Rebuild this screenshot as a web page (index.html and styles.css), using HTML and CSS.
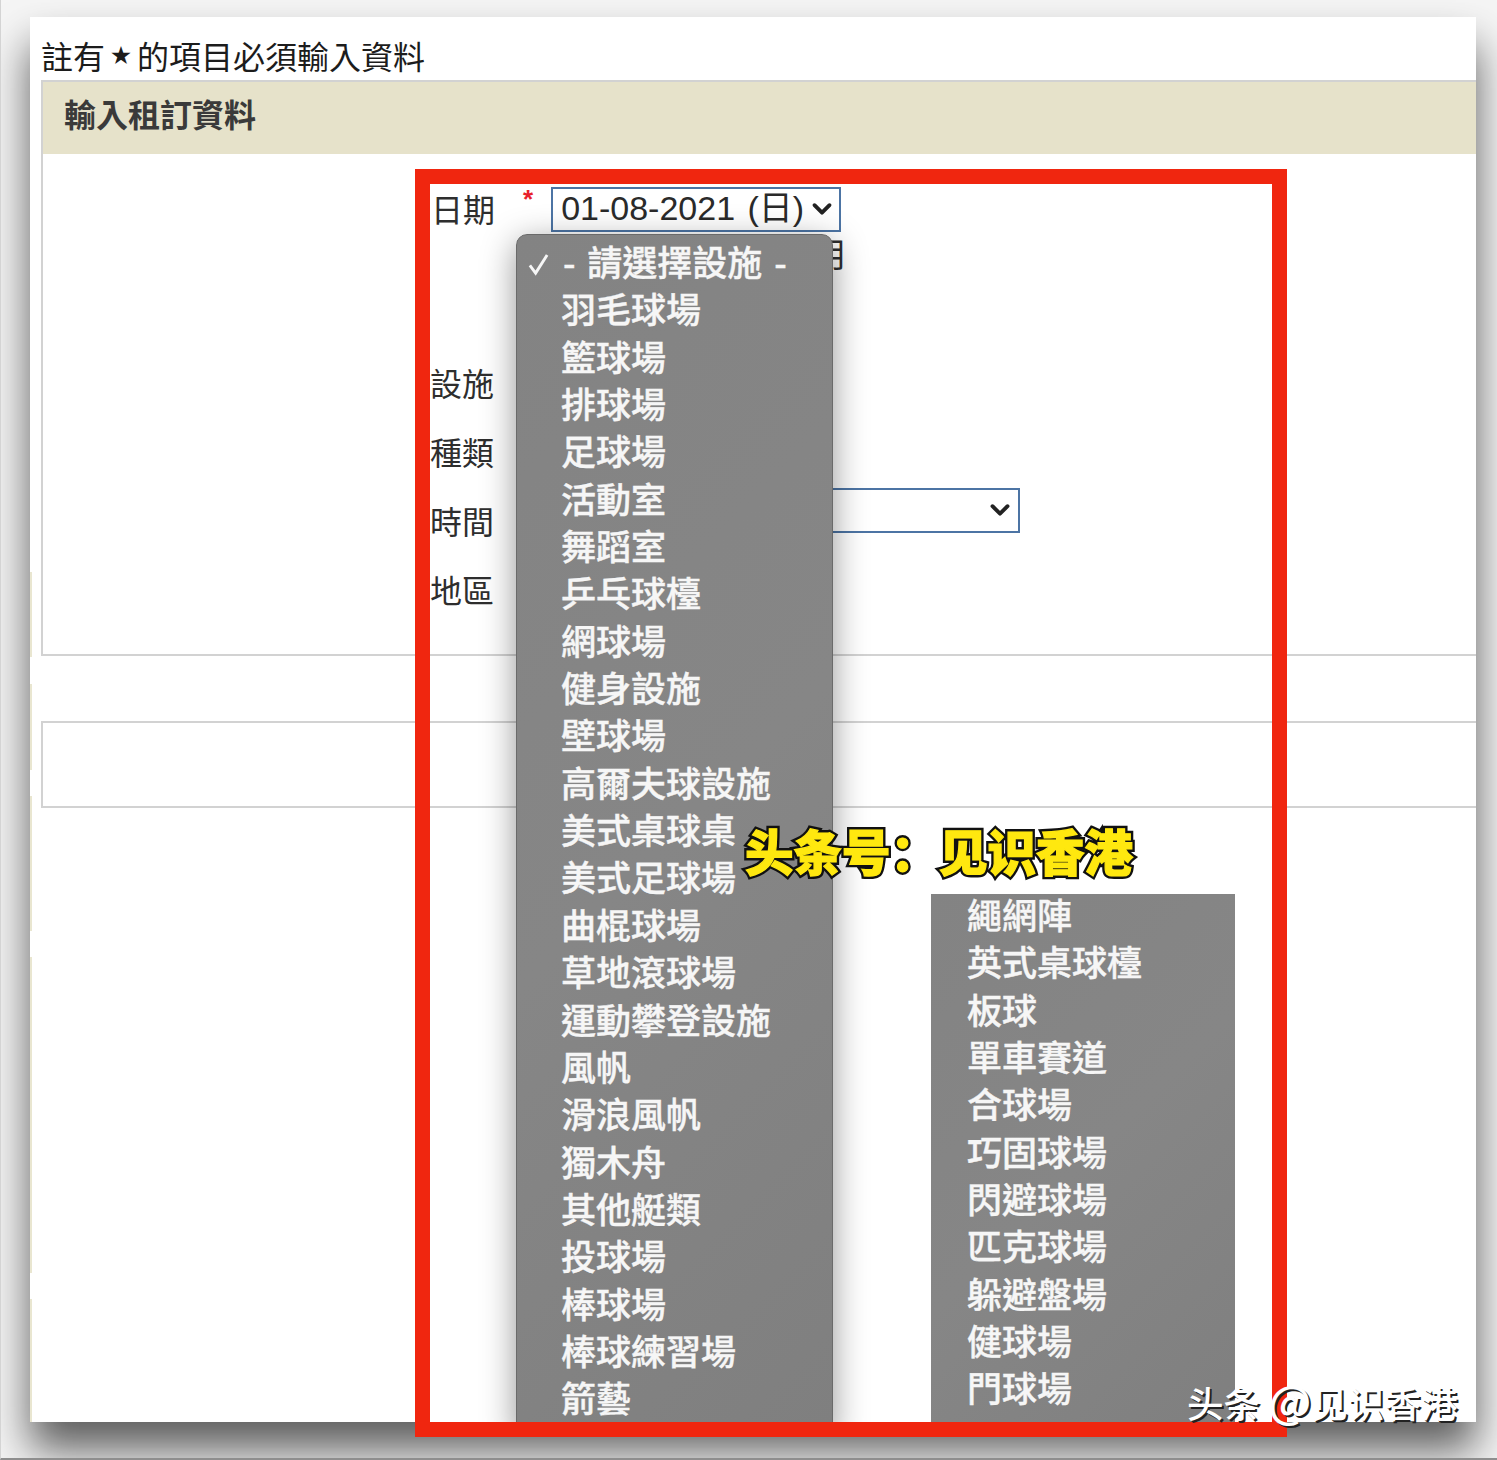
FILE: index.html
```html
<!DOCTYPE html>
<html lang="zh-Hant">
<head>
<meta charset="utf-8">
<title>輸入租訂資料</title>
<link rel="stylesheet" href="styles.css">
</head>
<body>
<div class="stage">
  <main class="window">
    <i class="edge"></i>
    <p class="note">註有<span class="star">★</span>的項目必須輸入資料</p>
    <section class="panel panel-form">
      <h1 class="panel-title">輸入租訂資料</h1>
      <form class="form">
        <div class="row row-date">
          <span class="label">日期</span>
          <span class="req">*</span>
          <div class="select select-date"><span>01-08-2021 (日)</span><svg class="chev" viewBox="0 0 20 14"><path d="M3 3l7 7 7-7"/></svg></div>
        </div>
        <div class="hint">用</div>
        <div class="row"><span class="label">設施</span></div>
        <div class="row"><span class="label">種類</span></div>
        <div class="row">
          <span class="label">時間</span>
          <div class="select select-time"><svg class="chev" viewBox="0 0 20 14"><path d="M3 3l7 7 7-7"/></svg></div>
        </div>
        <div class="row"><span class="label">地區</span></div>
      </form>
    </section>
    <section class="panel panel-empty"></section>

    <ul class="menu menu-main">
      <li class="checked"><svg class="check" viewBox="0 0 24 26"><path d="M3 14l6 8L21 3"/></svg>- 請選擇設施 -</li>
      <li>羽毛球場</li><li>籃球場</li><li>排球場</li><li>足球場</li><li>活動室</li><li>舞蹈室</li>
      <li>乒乓球檯</li><li>網球場</li><li>健身設施</li><li>壁球場</li><li>高爾夫球設施</li><li>美式桌球桌</li>
      <li>美式足球場</li><li>曲棍球場</li><li>草地滾球場</li><li>運動攀登設施</li><li>風帆</li><li>滑浪風帆</li>
      <li>獨木舟</li><li>其他艇類</li><li>投球場</li><li>棒球場</li><li>棒球練習場</li><li>箭藝</li>
    </ul>
    <ul class="menu menu-rest">
      <li>繩網陣</li><li>英式桌球檯</li><li>板球</li><li>單車賽道</li><li>合球場</li><li>巧固球場</li>
      <li>閃避球場</li><li>匹克球場</li><li>躲避盤場</li><li>健球場</li><li>門球場</li>
    </ul>
  </main>
  <div class="frame"></div>
  <div class="banner" lang="zh-Hans" data-text="头条号：见识香港">头条号：见识香港</div>
  <div class="mark" lang="zh-Hans">头条 <span class="at">@</span>见识香港</div>
</div>
</body>
</html>
```
FILE: styles.css
```css
* { box-sizing: border-box; }
html, body { margin: 0; padding: 0; }
body {
  width: 1497px;
  height: 1460px;
  overflow: hidden;
  background: #f5f5f5;
  font-family: "Liberation Sans", "Noto Sans CJK TC", sans-serif;
  color: #2b2b2b;
}
.stage {
  position: relative;
  width: 1497px;
  height: 1460px;
  padding: 17px 21px 36px 30px;
  border-left: 1px solid #d4d4d4;
  border-bottom: 2px solid #8e8e8e;
  overflow: hidden;
}
.window {
  position: relative;
  height: 100%;
  margin-left: -1px;
  padding: 20px 0 0 11px;
  background: #fff;
  overflow: hidden;
  box-shadow: 0 28px 40px rgba(0, 0, 0, .62);
}
.edge {
  position: absolute;
  left: 0;
  top: 555px;
  height: 850px;
  width: 2px;
  background: linear-gradient(
    #e9e6d0 0 85px, transparent 85px 112px,
    #e9e6d0 112px 198px, transparent 198px 224px,
    #e9e6d0 224px 359px, transparent 359px 385px,
    #e9e6d0 385px 701px, transparent 701px 727px,
    #e9e6d0 727px 850px);
}
.note {
  margin: 0;
  height: 43px;
  font-size: 32px;
  line-height: 36px;
  color: #1c1c1c;
  font-family: "Noto Sans CJK TC", sans-serif;
  white-space: pre;
}
.star {
  display: inline-block;
  width: 32px;
  text-align: center;
  font: 25px/36px "DejaVu Sans", sans-serif;
  vertical-align: top;
  padding-top: 1px;
}
.panel {
  margin-right: -3px;
  border: 2px solid #d2d2d2;
}
.panel-form { height: 576px; }
.panel-empty { height: 87px; margin-top: 65px; }
.panel-title {
  margin: 0;
  height: 72px;
  padding: 0 0 0 21px;
  background: #e6e2ca;
  font: 700 32px/62px "Noto Sans CJK TC", sans-serif;
  color: #3a3a3a;
}
.form {
  padding: 33px 0 0 387px;
  font-family: "Noto Sans CJK TC", sans-serif;
}
.row {
  display: flex;
  align-items: center;
  height: 69px;
}
.row-date { height: 46px; align-items: flex-start; padding-left: 1px; }
.label { width: 64px; padding-top: 14px; font-size: 32px; line-height: 46px; color: #2e2e2e; }
.row-date .label { padding-top: 0; margin-top: -2px; }
.req {
  margin: -1px 0 0 28px;
  color: #e8202a;
  font: 700 26px/26px "Liberation Sans", sans-serif;
}
.select {
  display: flex;
  align-items: center;
  justify-content: space-between;
  height: 45px;
  border: 2px solid #4c74a4;
  background: #fff;
}
.select-date {
  width: 290px;
  margin-left: 18px;
  padding: 0 6px 2px 8px;
  font: 34px/41px "Liberation Sans", "Noto Sans CJK TC", sans-serif;
  word-spacing: 3px;
  color: #2a2a2a;
}
.select-time {
  width: 502px;
  margin-left: 24px;
  margin-top: -4px;
  padding-right: 7px;
  justify-content: flex-end;
}
.chev { width: 22px; height: 15px; flex: none; }
.select-date .chev { margin-top: 2px; }
.chev path { fill: none; stroke: #222; stroke-width: 3.6; stroke-linecap: round; stroke-linejoin: round; }
.hint {
  height: 107px;
  margin-left: 382px;
  font-size: 34px;
  line-height: 40px;
  color: #2e2e2e;
}
.menu {
  position: absolute;
  margin: 0;
  padding: 0;
  list-style: none;
  background: linear-gradient(135deg, #838383, #868686 50%, #7f7f7f);
  font: 500 35px/47.35px "Noto Sans CJK TC", sans-serif;
  -webkit-text-stroke: .4px #f6f6f6;
  color: #f6f6f6;
  white-space: nowrap;
}
.menu-main {
  left: 486px;
  top: 217px;
  width: 317px;
  height: 1200px;
  padding: 2px 0 0 44px;
  border: 1px solid #6a6a6a;
  border-radius: 11px 11px 0 0;
  box-shadow: 0 8px 34px rgba(0, 0, 0, .42);
}
.menu-rest {
  left: 901px;
  top: 877px;
  width: 304px;
  height: 540px;
  padding: 0 0 0 36px;
}
.menu-rest li:first-child { margin-top: -4px; }
.checked { position: relative; padding-left: 2px; word-spacing: 4px; }
.check {
  position: absolute;
  left: -34px;
  top: 14.5px;
  width: 23px;
  height: 25px;
}
.check path { fill: none; stroke: #f6f6f6; stroke-width: 3; }
.frame {
  position: absolute;
  left: 414px;
  top: 169px;
  width: 872px;
  height: 1268px;
  border: 15px solid #f0260f;
}
.banner {
  position: absolute;
  z-index: 1;
  left: 744px;
  top: 815px;
  font: 900 48.5px/70px "Noto Sans CJK SC", sans-serif;
  color: #ffe80f;
  -webkit-text-stroke: 1.2px #ffe80f;
  white-space: nowrap;
}
.banner::before {
  content: attr(data-text);
  position: absolute;
  z-index: -1;
  left: 0;
  top: 0;
  color: #111;
  -webkit-text-stroke: 6px #111;
  text-shadow: 0 0 2px #fff, 1px 1px 1px #fff;
}
.mark {
  position: absolute;
  left: 1186px;
  top: 1378px;
  font: 500 36.6px/50px "Noto Sans CJK SC", sans-serif;
  color: #fff;
  text-shadow: 2px 2px 0 #222;
  white-space: nowrap;
}
.at { font-size: 44px; line-height: 40px; }
```
